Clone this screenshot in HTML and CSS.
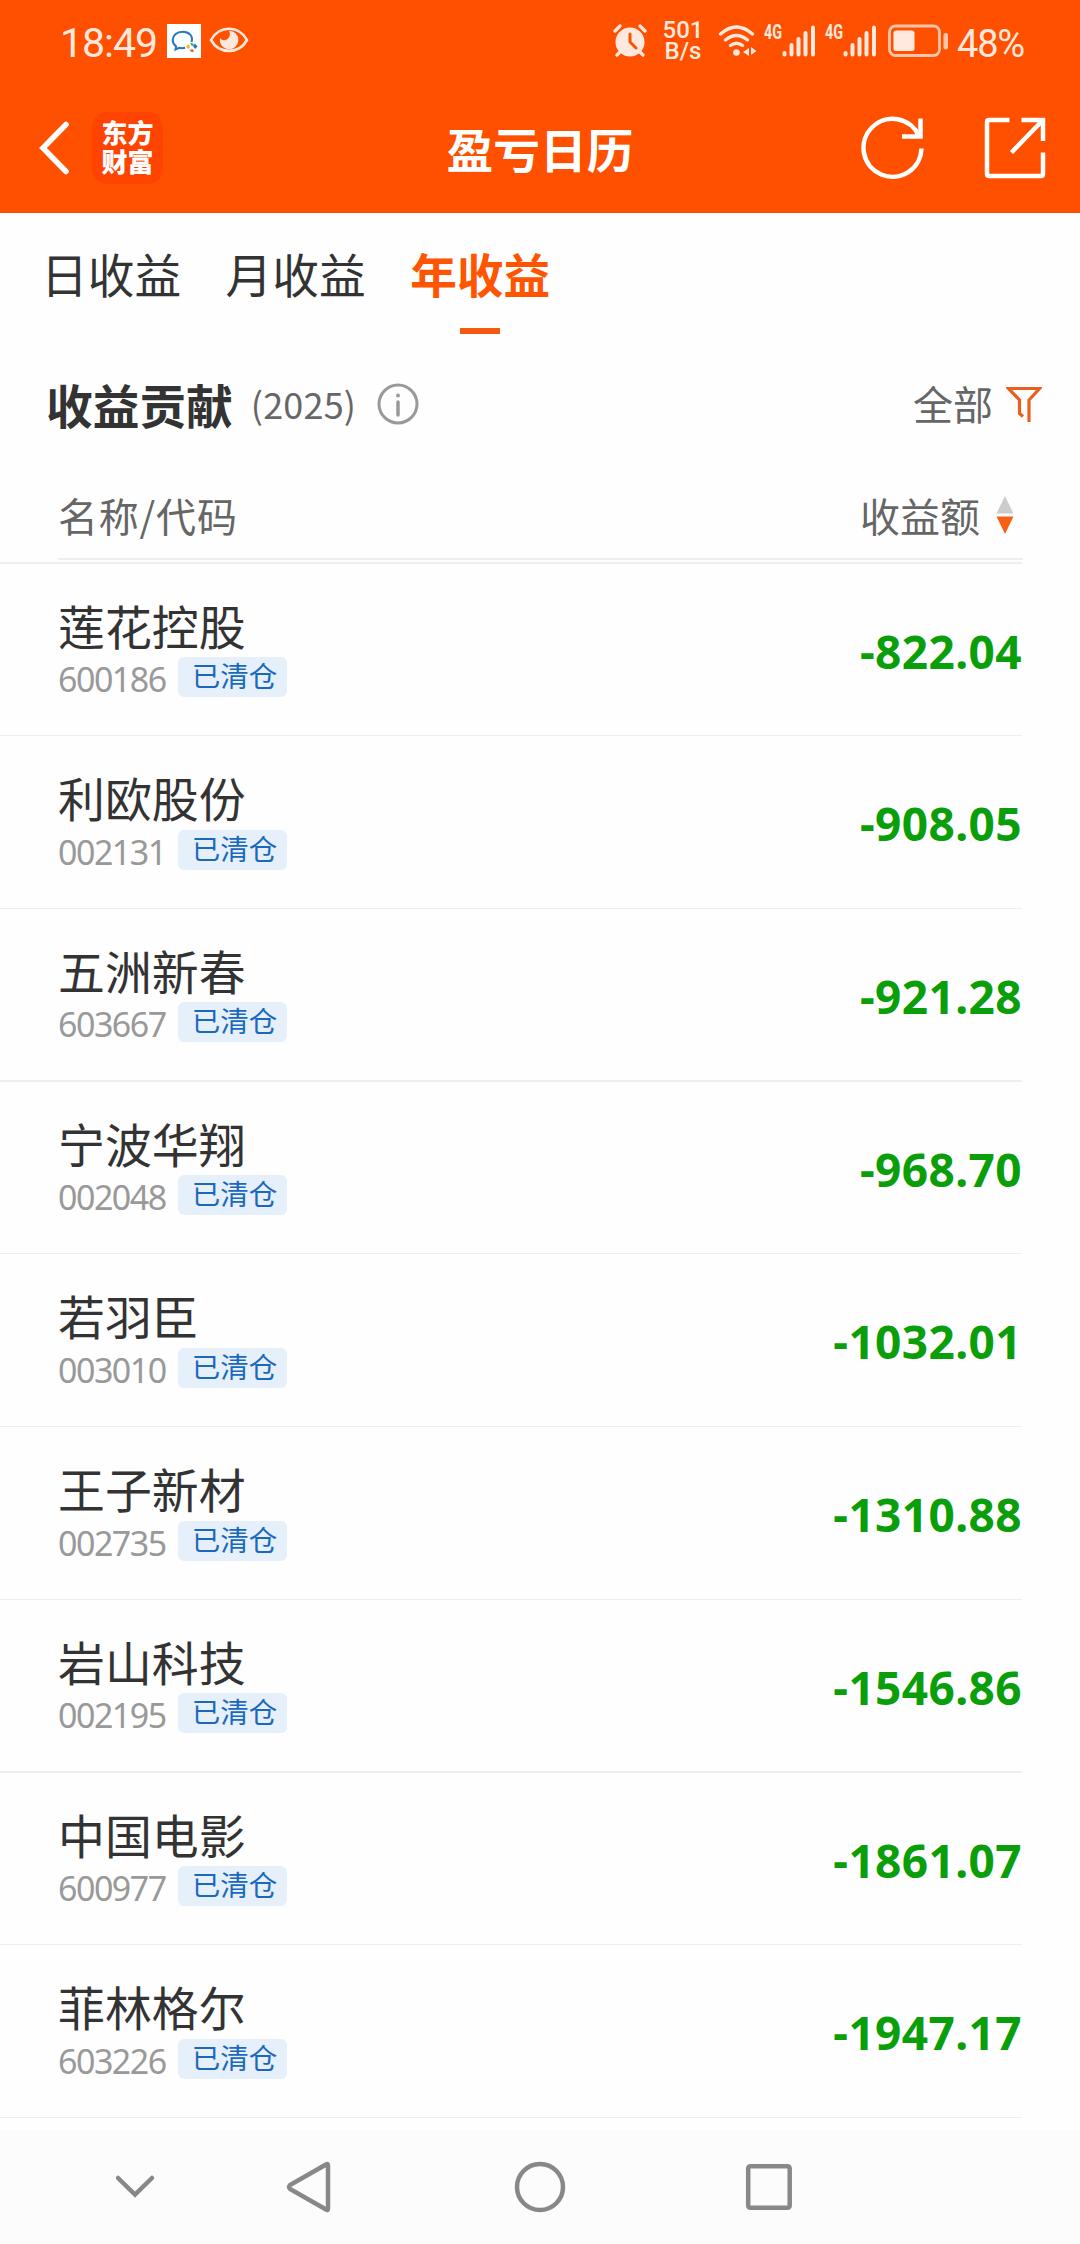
FILE: index.html
```html
<!DOCTYPE html>
<html lang="zh-CN">
<head>
    <meta charset="UTF-8">
    <title>盈亏日历</title>
    <link rel="stylesheet" href="styles.css">
</head>
<body>
    <header class="header">
        <!-- Status bar -->
        <div class="status">
            <span class="time">18:49</span>
            <svg class="wecom" width="34" height="34" viewBox="0 0 34 34">
                <rect width="34" height="34" fill="#fff"/>
                <path d="M24.5 18c2-6-2.500-10.200-8.800-10.200C9.500 7.800 5.700 11.500 5.700 16c0 3 1.400 5 3.400 6.400l-.6 3.100 3.700-1.700c2 .5 4 .5 6 0" fill="none" stroke="#2478bd" stroke-width="2"/>
                <path d="M23 18.500l4 1.500-2 2.500z" fill="#42a742"/>
                <path d="M26 22l2-2.500 2.500 3-2.500 2.500z" fill="#2478bd"/>
                <path d="M22.500 26l3-1 1.500 2-2 1.500z" fill="#e2642c"/>
                <path d="M19 22l3-1.500 1 3-2 1.500z" fill="#e9b92c"/>
            </svg>
            <svg class="eye" width="40" height="28" viewBox="0 0 40 28">
                <path d="M2 14C10-1 30-1 38 14 30 28.500 10 28.500 2 14z" fill="none" stroke="#ffe9df" stroke-width="2.600"/>
                <path d="M20 4.700a9.300 9.300 0 1 1-9 7.300c2 2.800 5.500 3 7.800.8 2.300-2.200 2.700-5.500 1.200-8.100z" fill="#ffe9df"/>
            </svg>
            <svg class="alarm" width="34" height="34" viewBox="0 0 34 34">
                <circle cx="17" cy="18" r="14.500" fill="#ffe9df"/>
                <path d="M2 7l5-5M32 7l-5-5M7 28l-3 3M27 28l3 3" stroke="#ffe9df" stroke-width="3.200" stroke-linecap="round"/>
                <path d="M17 10v8l6 6" fill="none" stroke="#ff5000" stroke-width="3" stroke-linecap="round"/>
            </svg>
            <span class="speed">501<br>B/s</span>
            <svg class="wifi" width="40" height="34" viewBox="0 0 40 34">
                <g fill="none" stroke="#ffe9df" stroke-width="3.300" stroke-linecap="round">
                    <path d="M2.500 10q16-14 32 0M7.500 16q11-9 22 0M12.500 21.500q6-4.500 12 0"/>
                </g>
                <circle cx="18.500" cy="28.500" r="3.300" fill="#ffe9df"/>
                <path d="M31 24v8l-6-4zM33 23v8l5.500-4z" fill="#ffe9df"/>
            </svg>
            <span class="net">4G</span>
            <svg class="bars" width="34" height="32" viewBox="0 0 34 32">
                <path d="M2.500 28v1.500M9.500 20v9.500M16.500 14v15.500M23.500 8v21.500M31 2.500v27" stroke="#ffe9df" stroke-width="4" stroke-linecap="round"/>
            </svg>
            <span class="net net2">4G</span>
            <svg class="bars" width="34" height="32" viewBox="0 0 34 32">
                <path d="M2.500 28v1.500M9.500 20v9.500M16.500 14v15.500M23.500 8v21.500M31 2.500v27" stroke="#ffe9df" stroke-width="4" stroke-linecap="round"/>
            </svg>
            <svg class="battery" width="61" height="34" viewBox="0 0 61 34">
                <rect x="1.500" y="2" width="50" height="29.500" rx="6" fill="none" stroke="#ffc5aa" stroke-width="2.800"/>
                <rect x="5.500" y="6.500" width="21" height="20.500" rx="2.500" fill="#ffe9df"/>
                <rect x="55.500" y="9" width="4.500" height="16.500" rx="2" fill="#ffc5aa"/>
            </svg>
            <span class="percent">48%</span>
        </div>

        <!-- Title bar -->
        <div class="titlebar">
            <div class="left">
                <svg width="34" height="56" viewBox="0 0 34 56">
                    <path d="M30 4.500L7 28l23 23.500" fill="none" stroke="#fff" stroke-width="5.500" stroke-linecap="round"/>
                </svg>
                <div class="logo">东方<br>财富</div>
            </div>
            <h1>盈亏日历</h1>
            <div class="right">
                <svg width="64" height="64" viewBox="0 0 64 64">
                    <path d="M61.500 32.500A29 29 0 1 1 59 20" fill="none" stroke="#fff" stroke-width="4.500"/>
                    <path d="M60.500 2.500v18H42" fill="none" stroke="#fff" stroke-width="4.500"/>
                </svg>
                <svg width="62" height="62" viewBox="0 0 62 62">
                    <path d="M25.500 3H5Q3 3 3 5v52q0 2 2 2h52q2 0 2-2V35.500M37.500 3H59v21M58 4L27.500 35.500" fill="none" stroke="#fff" stroke-width="4.500"/>
                </svg>
            </div>
        </div>
    </header>

    <!-- Tabs -->
    <nav class="tabs">
        <span class="tab">日收益</span>
        <span class="tab">月收益</span>
        <span class="tab active">年收益</span>
    </nav>

    <div class="section">
        <h2>收益贡献</h2>
        <span class="year">(2025)</span>
        <svg class="info" width="42" height="42" viewBox="0 0 42 42">
            <circle cx="21" cy="21" r="19" fill="none" stroke="#999" stroke-width="3"/>
            <circle cx="21" cy="12.500" r="2" fill="#999"/>
            <path d="M21 19v13" stroke="#999" stroke-width="3.500" stroke-linecap="round"/>
        </svg>
        <span class="filter">全部</span>
        <svg width="36" height="38" viewBox="0 0 36 38">
            <path d="M17 31.500l-3.500-3V15L2.500 3.500h31L23 15v22" fill="none" stroke="#e9601c" stroke-width="3.200"/>
        </svg>
    </div>

    <!-- Table head -->
    <div class="thead">
        <span class="label">名称/代码</span>
        <span class="sort">收益额
            <svg width="18" height="38" viewBox="0 0 18 38">
                <path d="M9 0l8.500 17.500H.5z" fill="#ccc"/>
                <path d="M9 38l8.500-17.500H.5z" fill="#f66015"/>
            </svg>
        </span>
    </div>

    <div class="list" id="list"></div>

    <!-- System navigation -->
    <footer class="sysnav">
        <svg width="42" height="28" viewBox="0 0 42 28">
            <path d="M4 5l17 16.500L38 5"/>
        </svg>
        <svg width="46" height="54" viewBox="0 0 46 54">
            <path d="M40 4.500q2-1.500 2 1v43q0 2.500-2 1L4 29q-2-2 0-4z"/>
        </svg>
        <svg width="54" height="54" viewBox="0 0 54 54">
            <circle cx="27" cy="27" r="23"/>
        </svg>
        <svg width="48" height="48" viewBox="0 0 48 48">
            <rect x="3.200" y="3.200" width="41.500" height="41.500" rx="2"/>
        </svg>
    </footer>

    <script>
        const stocks = [
            ['莲花控股', '600186', '-822.04'],
            ['利欧股份', '002131', '-908.05'],
            ['五洲新春', '603667', '-921.28'],
            ['宁波华翔', '002048', '-968.70'],
            ['若羽臣', '003010', '-1032.01'],
            ['王子新材', '002735', '-1310.88'],
            ['岩山科技', '002195', '-1546.86'],
            ['中国电影', '600977', '-1861.07'],
            ['菲林格尔', '603226', '-1947.17']
        ];

        document.getElementById('list').innerHTML = stocks.map(([name, code, profit]) => `
            <div class="row">
                <div>
                    <div class="name">${name}</div>
                    <div class="meta"><span class="code">${code}</span><span class="badge">已清仓</span></div>
                </div>
                <div class="profit">${profit}</div>
            </div>`).join('');
    </script>
</body>
</html>
```
FILE: styles.css
```css
* { box-sizing: border-box; margin: 0; padding: 0; }
body { width: 1080px; height: 2244px; display: flex; flex-direction: column; background: #fefefe; color: #333; font-family: "Noto Sans CJK SC", sans-serif; overflow: hidden; }
svg { display: block; flex: none; }

.header { height: 213px; flex: none; background: #ff5000; color: #fff; }

.status { display: flex; align-items: center; height: 82px; padding-left: 60px; color: #ffe9df; font-family: Roboto, sans-serif; white-space: nowrap; }
.time { width: 107px; font-size: 41px; line-height: 80px; letter-spacing: -1px; padding-top: 4px; }
.eye { margin: 0 0 2px 8px; }
.alarm { margin-left: 364px; }
.speed { width: 54px; margin: 0 0 0 9px; font-size: 24px; font-weight: 500; line-height: 21.500px; text-align: center; }
.wifi { margin-left: 8px; }
.net { width: 24px; margin: 0 -6px 18px 6px; font: bold 20px/20px Roboto, sans-serif; transform: scaleX(0.72); transform-origin: left; }
.net2 { margin-left: 9px; }
.battery { margin-left: 11px; }
.percent { margin-left: 8px; padding-top: 5px; font-size: 38px; line-height: 80px; letter-spacing: -1.200px; }

.titlebar { display: grid; grid-template-columns: 1fr auto 1fr; align-items: center; height: 131px; padding: 0 34px 0 36px; }
.left { display: flex; align-items: center; gap: 22px; }
.logo { width: 71px; height: 72px; padding-top: 5px; border-radius: 15px; background: #ff4300; font-size: 26px; font-weight: 900; line-height: 29.500px; text-align: center; }
h1 { margin-right: 2px; font-size: 46.700px; line-height: 60px; }
.right { display: flex; align-items: center; justify-content: flex-end; gap: 60px; }

.tabs { display: flex; gap: 44.500px; height: 121px; flex: none; padding: 27px 0 0 41px; font-size: 46.700px; line-height: 66px; }
.active { display: flex; flex-direction: column; align-items: center; color: #ff5500; font-weight: bold; }
.active::after { content: ""; width: 40px; height: 6px; margin-top: 22px; background: #f5590f; }

.section { display: flex; align-items: center; height: 139px; flex: none; padding: 0 38px 0 46px; }
h2 { font-size: 46.700px; line-height: 60px; }
.year { margin-left: 18px; padding-bottom: 2px; font-size: 36px; letter-spacing: 0.200px; color: #666; }
.info { margin-left: 21px; }
.filter { margin: 0 13px 2px auto; font-size: 40px; color: #666; }

.thead { display: flex; justify-content: space-between; align-items: center; width: 965px; height: 87px; flex: none; margin-left: 58px; padding: 0 9px 1px 0; border-bottom: 2px solid #eee; font-size: 40px; color: #666; }
.label { letter-spacing: 0.800px; }
.sort { display: flex; align-items: center; gap: 16px; }

.list { display: grid; grid-auto-rows: 171.350px; gap: 1.400px; width: 1022px; height: 1555.500px; flex: none; margin-top: 2px; padding: 1.500px 0 1px; background: #eee; }
.row { display: flex; justify-content: space-between; padding-left: 58px; background: #fefefe; }
.name { margin-top: 31px; font-size: 46.900px; line-height: 60px; }
.meta { display: flex; align-items: center; height: 46px; }
.code { width: 120px; padding-top: 3px; font: 34px/40px "Noto Sans", sans-serif; letter-spacing: -1.500px; color: #999; }
.badge { width: 109px; height: 40px; margin-bottom: 1px; padding-left: 4px; border-radius: 6px; background: #e5f0fa; color: #1b68bd; font-size: 28.500px; line-height: 36px; text-align: center; }
.profit { padding-top: 2px; font: bold 46px/171px "Noto Sans", sans-serif; letter-spacing: 0.400px; height: 171px; color: #0a9e0a; }

.sysnav { display: flex; align-items: center; height: 114px; margin-top: auto; padding-left: 114px; background: #fcfcfc; }
.sysnav path, .sysnav circle, .sysnav rect { fill: none; stroke: #888; stroke-width: 4.500px; stroke-linecap: round; }
.sysnav svg:nth-child(2) { margin-left: 130px; }
.sysnav svg:nth-child(3) { margin-left: 181px; }
.sysnav svg:nth-child(4) { margin-left: 178px; }
```
